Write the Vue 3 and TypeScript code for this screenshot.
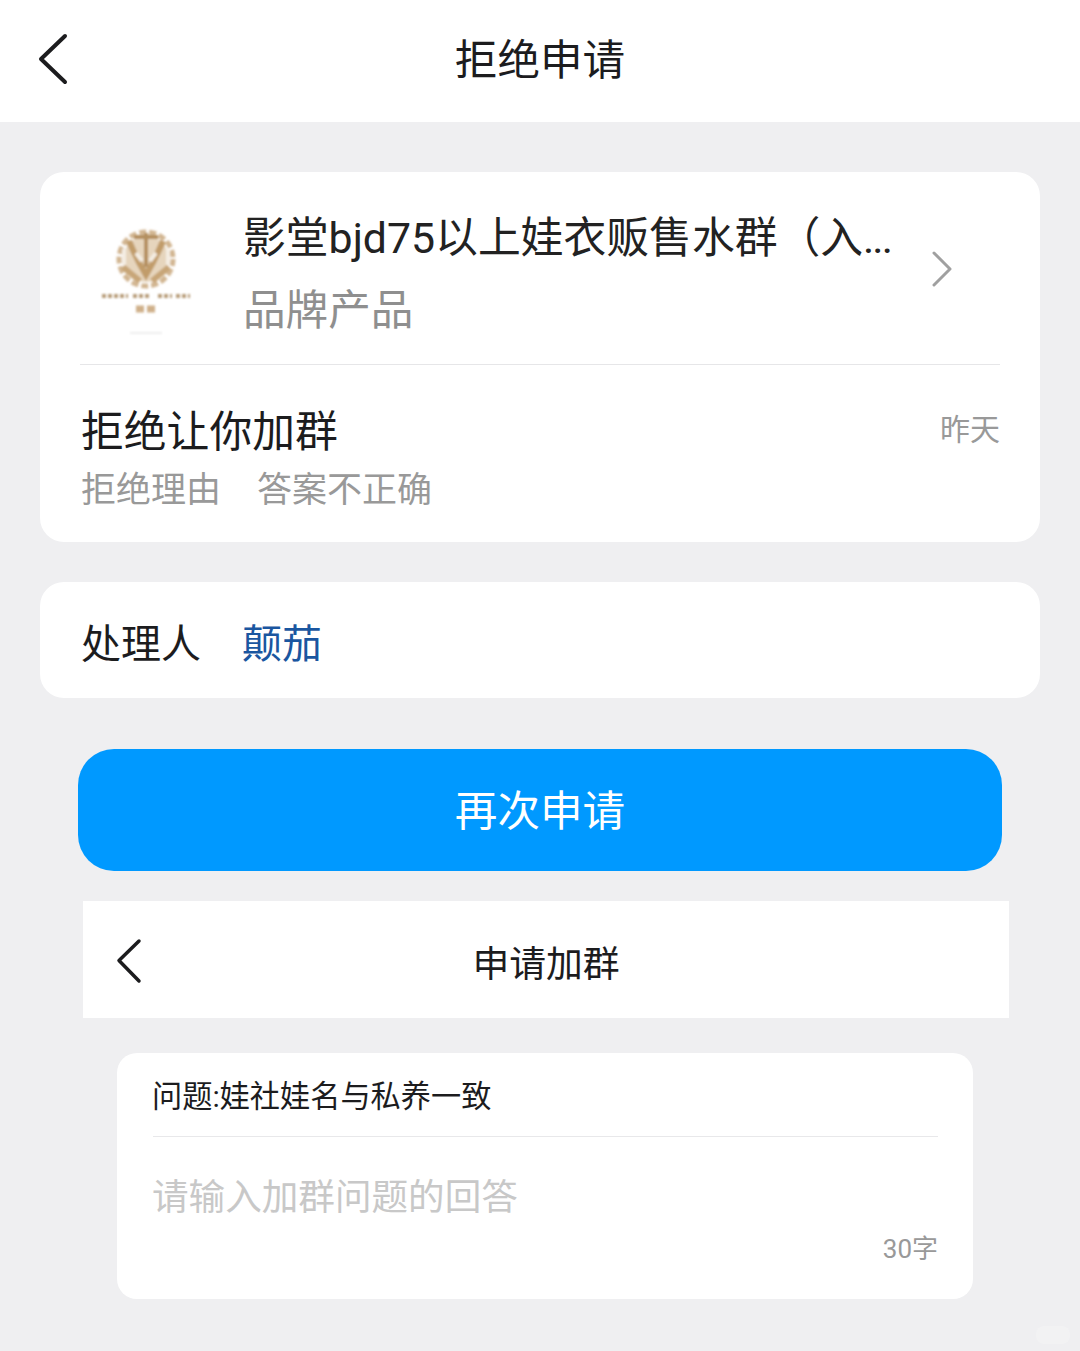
<template>
  <div class="page">
    <header class="top-bar">
      <button class="back-btn" type="button" aria-label="Back">
        <svg viewBox="0 0 30 52" width="30" height="52"><path d="M27 3 L3 26 L27 49" /></svg>
      </button>
      <h1>拒绝申请</h1>
    </header>

    <section class="card group-card">
      <div class="group-row">
        <svg class="logo" viewBox="0 0 100 120" width="100" height="120" aria-hidden="true">
          <defs>
            <filter id="soft"><feGaussianBlur stdDeviation="1.300" /></filter>
          </defs>
          <g filter="url(#soft)">
            <circle cx="50" cy="36" r="23" fill="#e6d5bd" />
            <circle cx="50" cy="36" r="27" fill="none" stroke="#d2b692" stroke-width="5" stroke-dasharray="7 3" />
            <path d="M33 18 C38 30 44 42 50 52 C56 42 62 30 67 18" fill="none" stroke="#c19c6b" stroke-width="6" />
            <path d="M50 10 V44 M38 14 H62" fill="none" stroke="#b48f5e" stroke-width="4" />
            <path d="M27 44 L44 58 M73 44 L56 58" stroke="#c8a678" stroke-width="6" />
            <path d="M28 26 V42 M72 26 V42 M40 30 L46 38 M60 30 L54 38" stroke="#f4ede3" stroke-width="4" />
            <path d="M6 73 H32 M37 73 H53 M62 73 H76 M80 73 H94" stroke="#b79c79" stroke-width="4" stroke-dasharray="4 2" />
            <path d="M40 86 H60" stroke="#cfb08a" stroke-width="7" stroke-dasharray="8 3" />
            <path d="M34 110 H66" stroke="#e8e8e8" stroke-width="1.500" />
          </g>
        </svg>
        <div class="group-text">
          <div class="group-name">{{ groupName }}<span class="dots">...</span></div>
          <div class="group-cat">品牌产品</div>
        </div>
        <svg class="chevron" viewBox="0 0 20 36" width="20" height="36"><path d="M2 2 L18 18 L2 34" /></svg>
      </div>
      <div class="reject-row">
        <div class="reject-head">
          <span class="reject-title">拒绝让你加群</span>
          <span class="reject-time">昨天</span>
        </div>
        <div class="reject-reason">
          <span>拒绝理由</span>
          <span>答案不正确</span>
        </div>
      </div>
    </section>

    <section class="card handler-card">
      <span class="handler-label">处理人</span>
      <span class="handler-name">颠茄</span>
    </section>

    <button class="apply-btn" type="button"><span>再次申请</span></button>

    <header class="sub-bar">
      <button class="sub-back" type="button" aria-label="Back">
        <svg viewBox="0 0 26 46" width="26" height="46"><path d="M23 3 L3 22.500 L23 43" /></svg>
      </button>
      <h2>申请加群</h2>
    </header>

    <section class="question-card">
      <div class="question">问题:娃社娃名与私养一致</div>
      <div class="placeholder">请输入加群问题的回答</div>
      <div class="counter">30字</div>
    </section>

    <div class="watermark"></div>
  </div>
</template>

<script setup lang="ts">
const groupName = '影堂bjd75以上娃衣贩售水群（入'
</script>

<style>
html, body {
  margin: 0;
  background: #efeff1;
}
</style>

<style scoped>
.page {
  position: relative;
  height: 1351px;
  overflow: hidden;
  background: #efeff1;
  font-family: Roboto, "Noto Sans CJK SC", "Noto Sans", sans-serif;
  color: #1c1c1e;
}

.top-bar {
  position: relative;
  display: flex;
  align-items: center;
  justify-content: center;
  height: 122px;
  background: #fff;
}
.top-bar h1 {
  margin: 0 0 3px;
  font-size: 42.600px;
  font-weight: 400;
  line-height: 106px;
}
.back-btn {
  position: absolute;
  left: 38px;
  top: 33px;
  padding: 0;
  border: none;
  background: none;
}
.back-btn svg,
.sub-back svg,
.chevron {
  display: block;
  fill: none;
  stroke-linecap: round;
  stroke-linejoin: round;
}
.back-btn svg {
  stroke: #1c1c1e;
  stroke-width: 4;
}

.card {
  margin: 0 40px;
  background: #fff;
  border-radius: 24px;
}

.group-card {
  margin-top: 50px;
  height: 370px;
  padding: 0 40px;
  box-sizing: border-box;
}
.group-row {
  display: flex;
  align-items: center;
  height: 192px;
  border-bottom: 1px solid #e6e6e8;
}
.logo {
  flex: none;
  margin: 30px 0 0 16px;
}
.group-text {
  flex: 1;
  min-width: 0;
  margin: 12px 0 0 47px;
}
.group-name {
  font-size: 42.800px;
  line-height: 60px;
  white-space: nowrap;
  color: #222;
}
.dots {
  letter-spacing: -2px;
}
.group-cat {
  margin-top: 12px;
  font-size: 42.600px;
  line-height: 60px;
  color: #8f8f8f;
}
.chevron {
  flex: none;
  margin: 1px 48px 0 0;
  stroke: #a0a0a0;
  stroke-width: 3;
}

.reject-row {
  padding-top: 33px;
}
.reject-head {
  display: flex;
  justify-content: space-between;
  align-items: center;
  height: 60px;
}
.reject-title {
  font-size: 42.800px;
  margin-left: 1px;
}
.reject-time {
  font-size: 30px;
  color: #999;
  margin-bottom: 2px;
}
.reject-reason {
  display: flex;
  gap: 36px;
  margin-top: 8px;
  margin-left: 1px;
  font-size: 35px;
  line-height: 50px;
  color: #999;
}

.handler-card {
  display: flex;
  align-items: center;
  margin-top: 40px;
  height: 116px;
  padding: 2px 0 0 41px;
  box-sizing: border-box;
  gap: 41px;
  font-size: 40px;
}
.handler-name {
  color: #1a56a0;
}

.apply-btn {
  display: block;
  width: 924px;
  height: 122px;
  margin: 51px 0 0 78px;
  padding: 0 0 5px;
  border: none;
  border-radius: 36px;
  background: #0099ff;
  color: #fff;
  font-family: inherit;
  font-size: 42.600px;
}

.sub-bar {
  position: relative;
  display: flex;
  align-items: center;
  justify-content: center;
  width: 926px;
  height: 117px;
  margin: 30px 0 0 83px;
  background: #fff;
}
.sub-bar h2 {
  margin: 2px 0 0;
  font-size: 36.800px;
  font-weight: 400;
}
.sub-back {
  position: absolute;
  left: 33px;
  top: 37px;
  padding: 0;
  border: none;
  background: none;
}
.sub-back svg {
  stroke: #1c1c1e;
  stroke-width: 3.500;
}

.question-card {
  width: 856px;
  height: 246px;
  margin: 35px 0 0 117px;
  padding: 0 35px 0 36px;
  box-sizing: border-box;
  background: #fff;
  border-radius: 20px;
}
.question {
  height: 83px;
  line-height: 88px;
  font-size: 30.200px;
  text-indent: -1px;
  border-bottom: 1px solid #e8e8ea;
}
.placeholder {
  margin-top: 35px;
  font-size: 36.600px;
  line-height: 52px;
  text-indent: -1px;
  color: #c8c8c8;
}
.counter {
  margin-top: 5px;
  text-align: right;
  font-size: 26px;
  line-height: 40px;
  color: #999;
}

.watermark {
  position: absolute;
  left: 1036px;
  top: 1326px;
  width: 34px;
  height: 18px;
  border-radius: 8px;
  background: rgba(255, 255, 255, 0.2);
}
</style>
